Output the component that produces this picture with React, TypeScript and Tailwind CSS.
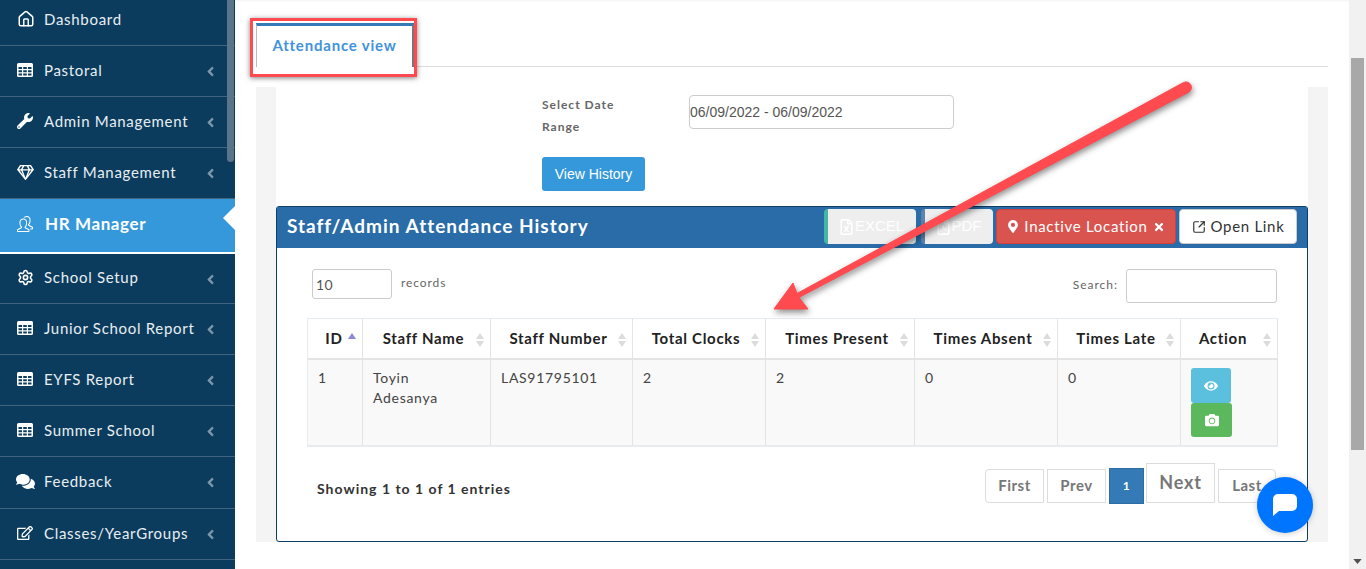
import React from "react";
import { FaAngleLeft, FaCamera, FaComments, FaEye, FaMapMarkerAlt, FaRegEdit, FaRegFileExcel, FaRegFilePdf, FaRegGem, FaTimes, FaWrench } from "react-icons/fa";
import { SlPeople } from "react-icons/sl";
import { House, Settings, SquareArrowOutUpRight } from "lucide-react";

const GridIcon = () => (
  <svg viewBox="0 0 16 14" className="h-[14px] w-4">
    <path
      fillRule="evenodd"
      d="M1.5 0h13A1.5 1.5 0 0 1 16 1.5v11a1.5 1.5 0 0 1-1.5 1.5h-13A1.5 1.5 0 0 1 0 12.5v-11A1.5 1.5 0 0 1 1.5 0zM1.5 4v2h3.5V4zM6.2 4v2h3.6V4zM11 4v2h3.5V4zM1.5 7.2v2h3.5v-2zM6.2 7.2v2h3.6v-2zM11 7.2v2h3.5v-2zM1.5 10.4v2h3.5v-2zM6.2 10.4v2h3.6v-2zM11 10.4v2h3.5v-2z"
      fill="currentColor"
    />
  </svg>
);

const menu = [
  { label: "Dashboard", icon: <House className="h-[18px] w-[18px]" strokeWidth={2} />, row: "h-[51px]", plain: true },
  { label: "Pastoral", icon: <GridIcon />, row: "h-[51px]" },
  { label: "Admin Management", icon: <FaWrench className="h-4 w-4" />, row: "h-[51px]" },
  { label: "Staff Management", icon: <FaRegGem className="h-[17px] w-[17px]" />, row: "h-[51px]" },
  { label: "HR Manager", icon: <SlPeople className="h-4 w-4" />, row: "h-[55px]", active: true },
  { label: "School Setup", icon: <Settings className="h-[17px] w-[17px]" strokeWidth={2.2} />, row: "h-[50px]" },
  { label: "Junior School Report", icon: <GridIcon />, row: "h-[51px]" },
  { label: "EYFS Report", icon: <GridIcon />, row: "h-[51px]" },
  { label: "Summer School", icon: <GridIcon />, row: "h-[51px]" },
  { label: "Feedback", icon: <FaComments className="-ml-px h-[19px] w-[19px]" />, row: "h-[52px]" },
  { label: "Classes/YearGroups", icon: <FaRegEdit className="h-4 w-4" />, row: "h-[51px]" },
];

const columns = [
  { title: "ID", width: "w-[55px]", value: "1", pad: "pr-[2px]" },
  { title: "Staff Name", width: "w-[128px]", value: "Toyin\nAdesanya", pad: "pr-[6px]" },
  { title: "Staff Number", width: "w-[142px]", value: "LAS91795101", pad: "pr-[6px]" },
  { title: "Total Clocks", width: "w-[133px]", value: "2", pad: "pr-[6px]" },
  { title: "Times Present", width: "w-[149px]", value: "2", pad: "pr-[6px]" },
  { title: "Times Absent", width: "w-[143px]", value: "0", pad: "pr-[6px]" },
  { title: "Times Late", width: "w-[123px]", value: "0", pad: "pr-[6px]" },
  { title: "Action", width: "w-[97px]", value: "", pad: "pr-[12px]" },
];

const SortIcon = ({ asc }: { asc?: boolean }) => (
  <svg viewBox="0 0 10 16" className="absolute right-[5px] top-[13px] h-4 w-[10px]">
    <path d="M5 1l4 6H1z" className={asc ? "fill-[#8a8ad8]" : "fill-[#dcdcdc]"} />
    {!asc && <path d="M5 15l4-6H1z" className="fill-[#dcdcdc]" />}
  </svg>
);

const PageLink = ({ label, cls }: { label: string; cls: string }) => (
  <span className={`flex items-center justify-center border border-[#ddd] bg-white pb-[2px] font-bold text-[#777] ${cls}`}>{label}</span>
);

export default function App() {
  return (
    <div className="relative flex h-[569px] w-[1366px] overflow-hidden bg-white text-[14px] tracking-[0.5px] text-[#333] [font-family:Lato,sans-serif]">
      {/* sidebar */}
      <aside className="relative h-full w-[235px] shrink-0 overflow-hidden bg-[#0b3c5d]">
        <div className="-mt-[5px]">
          {menu.map((m) => (
            <div
              key={m.label}
              className={`relative flex items-center ${m.row} ${
                m.active ? "border-b-2 border-white bg-[#3498db] pb-[4px] pl-[17px] font-bold text-white" : "border-b border-[#41657f] pb-[2px] pl-[17px] text-[#e8eef2]"
              }`}
            >
              <span className="flex w-[27px] text-white">{m.icon}</span>
              <span className={m.active ? "ml-px text-[17px] tracking-[0.6px]" : "text-[15px] tracking-[0.7px]"}>{m.label}</span>
              {!m.plain && !m.active && <FaAngleLeft className="absolute left-[205px] top-[18px] h-[15px] w-[11px] text-[#7d97a9]" />}
              {m.active && <span className="absolute right-0 top-[7px] h-0 w-0 border-y-[12px] border-r-[12px] border-y-transparent border-r-white" />}
            </div>
          ))}
        </div>
        <div className="absolute right-px top-0 h-[162px] w-[7px] rounded-b bg-[#5a7489]" />
      </aside>

      {/* main */}
      <main className="h-full w-[1114px] shrink-0 px-[21px] pt-[23px] shadow-[inset_0_2px_2px_-1px_rgba(0,0,0,0.05)]">
        <div className="flex h-[44px] border-b border-[#ddd]">
          <div className="flex h-[44px] w-[158px] justify-center border-l border-r-2 border-t-[3px] border-l-[#bbb] border-r-[#777] border-t-[#337ab7] bg-white pt-[8px] text-[15px] font-bold tracking-[0.8px] text-[#3f93dc]">
            Attendance view
          </div>
        </div>

        <div className="mt-[20px] h-[455px] bg-[#f4f4f4] px-[20px]">
          <div className="h-[119px] bg-white pl-[266px] pt-[8px]">
            <div className="flex">
              <div className="-mt-px w-[147px] text-[12px] leading-[22px] font-bold tracking-[1px] text-[#666]">
                Select Date
                <br />
                Range
              </div>
              <input
                readOnly
                value="06/09/2022 - 06/09/2022"
                className="h-[34px] w-[265px] rounded border border-[#ccc] bg-white text-[14px] tracking-normal text-[#555] [font-family:'Liberation_Sans',sans-serif]"
              />
            </div>
            <button className="mt-[19px] h-[34px] w-[103px] rounded-[3px] bg-[#3498db] text-[14px] tracking-normal text-white [font-family:'Liberation_Sans',sans-serif]">
              View History
            </button>
          </div>

          <section className="h-[336px] rounded-[3px] border border-[#0e3f66] bg-white">
            <header className="flex h-[41px] items-center bg-[#2a6ca8] pb-[2px] pl-[10px] pr-[10px]">
              <h2 className="text-[19px] font-bold tracking-[1px] text-white">Staff/Admin Attendance History</h2>
              <div className="ml-auto flex items-center gap-[3px] text-[15px] whitespace-nowrap">
                <span className="flex h-[35px] w-[92px] items-center justify-center gap-[2px] rounded-[4px] border-l-[4px] border-l-[#45b6a6] bg-[#eee] tracking-normal text-white [font-family:'Liberation_Sans',sans-serif]">
                  <FaRegFileExcel className="h-[16px] w-[13px]" />
                  EXCEL
                </span>
                <span className="ml-[2px] flex h-[35px] w-[72px] items-center justify-center gap-[2px] rounded-[4px] border-l-[4px] border-l-[#5e82ac] bg-[#eee] tracking-normal text-white [font-family:'Liberation_Sans',sans-serif]">
                  <FaRegFilePdf className="h-[16px] w-[13px]" />
                  PDF
                </span>
                <span className="flex h-[35px] w-[180px] items-center justify-center gap-[6px] rounded-[4px] border border-[#d43f3a] bg-[#d9534f] tracking-[0.7px] text-white">
                  <FaMapMarkerAlt className="h-[13px] w-[10px]" />
                  Inactive Location
                  <FaTimes className="h-[12px] w-[10px]" />
                </span>
                <span className="flex h-[35px] w-[118px] items-center justify-center gap-[5px] rounded-[4px] border border-[#ccc] bg-white tracking-[0.7px] text-[#333]">
                  <SquareArrowOutUpRight className="h-[14px] w-[14px]" />
                  Open Link
                </span>
              </div>
            </header>

            <div className="px-[30px] pt-[21px]">
              <div className="flex h-[49px] items-start">
                <input readOnly value="10" className="ml-[5px] h-[30px] w-[80px] rounded-[3px] border border-[#ccc] pl-[3px] text-[14px] text-[#555]" />
                <span className="ml-[9px] mt-[5px] text-[12px] tracking-[0.9px] text-[#666]">records</span>
                <span className="ml-auto mt-[7px] text-[12px] tracking-[1px] text-[#666]">Search:</span>
                <input readOnly className="ml-[8px] h-[34px] w-[151px] rounded-[3px] border border-[#ccc]" />
              </div>

              <table className="w-[970px] table-fixed border-separate border-spacing-0 border-b-2 border-l border-t border-[#e7ecf1]">
                <thead>
                  <tr>
                    {columns.map((c, i) => (
                      <th
                        key={c.title}
                        className={`relative h-[41px] border-b-2 border-r border-[#e4e4e4] text-center text-[15px] font-bold tracking-[0.7px] whitespace-nowrap text-[#222] ${c.pad} ${c.width}`}
                      >
                        {c.title}
                        <SortIcon asc={i === 0} />
                      </th>
                    ))}
                  </tr>
                </thead>
                <tbody>
                  <tr>
                    {columns.map((c) => (
                      <td key={c.title} className="h-[85px] border-r border-[#e4e4e4] bg-[#f9f9f9] px-[10px] pt-[8px] align-top leading-[20px] tracking-[0.7px] whitespace-pre-line text-[#444]">
                        {c.title === "Action" ? (
                          <div className="flex flex-col">
                            <span className="flex h-[35px] w-[40px] items-center justify-center rounded-[3px] bg-[#5bc0de] text-white">
                              <FaEye className="h-[14px] w-[14px]" />
                            </span>
                            <span className="flex h-[34px] w-[41px] items-center justify-center rounded-[3px] bg-[#5cb85c] text-white">
                              <FaCamera className="h-[14px] w-[14px]" />
                            </span>
                          </div>
                        ) : (
                          c.value
                        )}
                      </td>
                    ))}
                  </tr>
                </tbody>
              </table>

              <div className="mt-[16px] flex items-start">
                <span className="ml-[10px] mt-[15px] font-bold tracking-[1px] text-[#333]">Showing 1 to 1 of 1 entries</span>
                <div className="ml-auto mr-px flex items-start gap-[3px] text-[15px]">
                  <PageLink label="First" cls="mt-[6px] h-[34px] w-[59px] rounded-l" />
                  <PageLink label="Prev" cls="mt-[6px] h-[34px] w-[59px]" />
                  <span className="mt-[5px] flex h-[36px] w-[35px] items-center justify-center border border-[#2e6da4] bg-[#337ab7] text-[12px] font-bold text-white">1</span>
                  <PageLink label="Next" cls="-ml-[1px] h-[40px] w-[69px] text-[18px] tracking-[0.8px]" />
                  <PageLink label="Last" cls="mt-[6px] h-[34px] w-[58px] rounded-r" />
                </div>
              </div>
            </div>
          </section>
        </div>
      </main>

      {/* browser scrollbar */}
      <div className="relative h-full w-[17px] bg-[#f1f1f1]">
        <div className="absolute left-[2px] top-[58px] h-[392px] w-[13px] bg-[#a8a8a8]" />
        <svg viewBox="0 0 10 6" className="absolute bottom-[5px] left-[4px] h-[5px] w-[9px]">
          <path d="M0 0h10L5 6z" fill="#505050" />
        </svg>
      </div>

      {/* screenshot annotations */}
      <div className="pointer-events-none absolute left-[250px] top-[18px] h-[59px] w-[167px] border-[3px] border-[#ff4a4f] shadow-[0_1px_5px_rgba(0,0,0,0.5)]" />
      <svg className="pointer-events-none absolute left-0 top-0 drop-shadow-[1px_3px_3px_rgba(0,0,0,0.45)]" width="1366" height="569" viewBox="0 0 1366 569">
        <path
          d="M1183.5 82.5a5.5 5.5 0 0 1 5.5 9.5L799 297.5l9 11.5L774 309l19-26 4 10.5z"
          fill="#ff4a4f"
          stroke="#ff4a4f"
          strokeLinejoin="round"
        />
      </svg>

      {/* chat bubble */}
      <div className="absolute left-[1257px] top-[477px] flex h-[56px] w-[56px] items-center justify-center rounded-full bg-[#0075ff] shadow-[0_1px_6px_rgba(0,0,0,0.2)]">
        <svg viewBox="0 0 26 24" className="h-[24px] w-[26px]">
          <path d="M6 1h14a5 5 0 0 1 5 5v7a5 5 0 0 1-5 5H7l-6 5V6a5 5 0 0 1 5-5z" fill="#fff" />
        </svg>
      </div>
    </div>
  );
}
